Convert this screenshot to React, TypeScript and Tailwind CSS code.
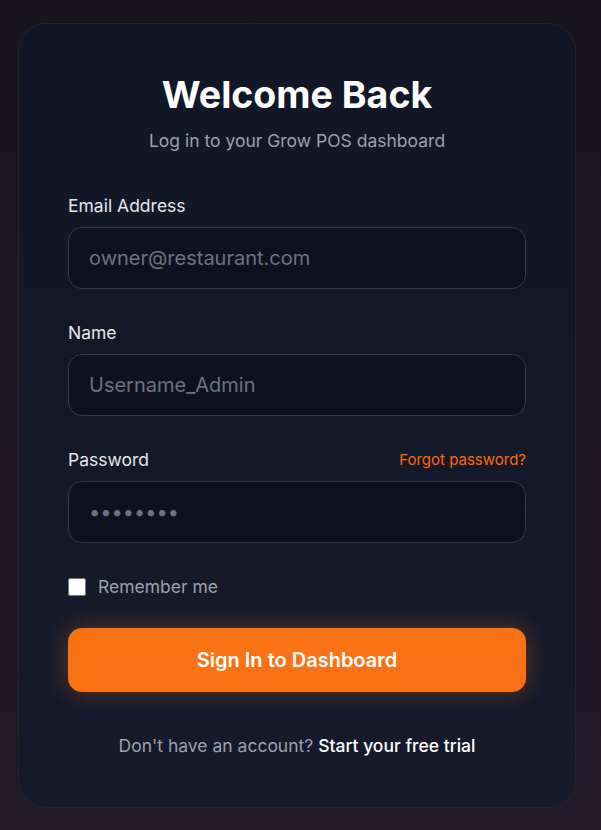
import React, { useState } from 'react';

function Field({ label, placeholder, type = 'text', right }: { label: string; placeholder: string; type?: string; right?: React.ReactNode }) {
    return (
        <div>
            <div className="flex items-center justify-between mb-[9px]">
                <label className="text-[17.5px] text-gray-200 leading-6">{label}</label>
                {right}
            </div>
            <input
                type={type}
                placeholder={placeholder}
                className="w-full h-[62px] px-5 rounded-[14px] bg-[#0f121e] border border-[#323a4b] text-[20px] text-gray-200 placeholder:text-[#6b7280] outline-none"
            />
        </div>
    );
}

export default function App() {
    const [remember, setRemember] = useState(false);

    return (
        <div
            className="min-h-screen flex items-center bg-gradient-to-b from-[#19151c] to-[#231a27]"
            style={{ fontFamily: 'Inter, "Noto Sans", sans-serif' }}
        >
            <div className="ml-[18px] w-[558px] h-[785px] rounded-[28px] border border-[#1e2535] bg-gradient-to-b from-[#111726] to-[#161a2c] px-[49px] pt-[51px]">
                {/* Header */}
                <div className="text-center">
                    <h1 className="text-[37.5px] font-bold text-white leading-10">Welcome Back</h1>
                    <p className="mt-[14px] text-[17.5px] text-gray-400 leading-6">Log in to your Grow POS dashboard</p>
                </div>

                {/* Form */}
                <div className="mt-[41px] flex flex-col gap-[32px]">
                    <Field label="Email Address" placeholder="owner@restaurant.com" />
                    <Field label="Name" placeholder="Username_Admin" />
                    <Field
                        label="Password"
                        type="password"
                        placeholder="••••••••"
                        right={<a className="text-[15px] text-orange-500 leading-6">Forgot password?</a>}
                    />
                </div>

                <label className="mt-[32px] flex items-center gap-3 cursor-pointer">
                    <input
                        type="checkbox"
                        checked={remember}
                        onChange={() => setRemember(!remember)}
                        className="w-[18px] h-[18px] rounded-sm accent-orange-500"
                    />
                    <span className="text-[17.5px] text-gray-400 leading-6">Remember me</span>
                </label>

                <button className="mt-[29px] w-full h-16 rounded-[14px] bg-[#f97316] text-white text-[20px] font-semibold shadow-[0_0_22px_rgba(249,115,22,0.35)]">
                    Sign In to Dashboard
                </button>

                <p className="mt-[42px] text-center text-[17.5px] text-gray-400 leading-6">
                    Don't have an account? <a className="text-white font-medium">Start your free trial</a>
                </p>
            </div>
        </div>
    );
}
